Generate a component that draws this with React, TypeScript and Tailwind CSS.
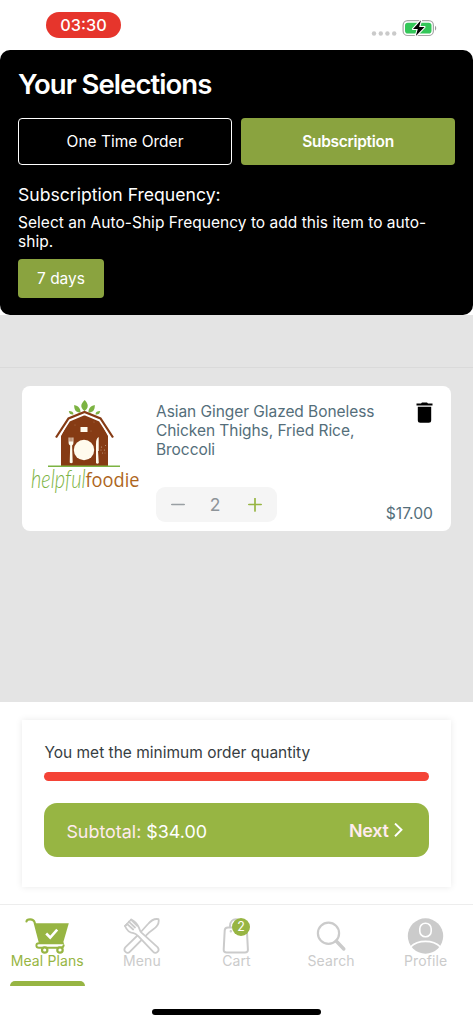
import type { ReactNode } from "react";

function StatusBar() {
  return (
    <header className="flex h-[50px] shrink-0 items-start justify-between pl-[46px] pr-9">
      <div className="mt-3 flex h-[25.5px] w-[75px] items-center justify-center rounded-full bg-[#e6352c] text-[16.3px] font-medium text-white">
        03:30
      </div>
      <svg className="mt-[18px]" width="66" height="20" viewBox="0 0 66 20">
        <g fill="#cacaca">
          <circle cx="3" cy="15.5" r="2.2" />
          <circle cx="9.8" cy="15.5" r="2.2" />
          <circle cx="16.4" cy="15.5" r="2.2" />
          <circle cx="23.2" cy="15.5" r="2.2" />
        </g>
        <rect x="32.1" y="2.7" width="30.3" height="14.8" rx="4.6" fill="white" stroke="#a6a6a6" strokeWidth="1.2" />
        <rect x="34" y="4.7" width="26.5" height="10.8" rx="2.8" fill="#34c759" />
        <path d="M64 7.7c1.600.7 1.600 4.100 0 4.800z" fill="#9b9b9b" />
        <path d="M50 2.200 42 11h4.800l-2 7 8.700-8.900h-5.400z" fill="black" stroke="white" strokeWidth="2.2" strokeLinejoin="round" paintOrder="stroke" />
      </svg>
    </header>
  );
}

function SelectionsPanel() {
  return (
    <section className="h-[265px] shrink-0 rounded-[10px] bg-black px-[18px] text-white">
      <h1 className="pt-[16.500px] text-[27.500px] leading-[34px] font-semibold tracking-[-0.950px]">Your Selections</h1>
      <div className="mt-[17px] flex gap-[9px]">
        <button className="h-[47.500px] w-[214px] rounded-[4px] border border-white text-[15.5px]">One Time Order</button>
        <button className="h-[47.500px] w-[214px] rounded-[4px] bg-[#8aa33f] text-[15.5px] font-semibold tracking-[-0.3px]">Subscription</button>
      </div>
      <h2 className="mt-[17.500px] text-[17.6px] leading-6">Subscription Frequency:</h2>
      <p className="mt-[6.500px] text-[15.5px] leading-[19px] tracking-[0.03px]">
        Select an Auto-Ship Frequency to add this item to auto-
        <br />
        ship.
      </p>
      <button className="mt-2 h-[38.500px] w-[86px] rounded-[4px] bg-[#8aa33f] text-[15.5px]">7 days</button>
    </section>
  );
}

function FoodieLogo() {
  return (
    <svg className="ml-2 mt-3 shrink-0" width="109" height="109" viewBox="30 398 109 109">
      <g fill="#7cb342">
        <path d="M84.500 411c-4.600-3.500-4-7 .2-11 3.900 4.200 4.300 7.700-.2 11z" />
        <path d="M80.500 412.500c-4.500 0-6.500-2.500-6.300-7.500 4.500 1.200 6.500 3.500 6.300 7.500zM88.500 412.500c4.500 0 6.500-2.500 6.300-7.500-4.500 1.200-6.500 3.500-6.300 7.500z" />
        <path d="M73.500 414.500c-2.700.5-4.300-.8-4.700-3.500 3 0 4.600.9 4.700 3.500zM95.500 414.500c2.700.5 4.300-.8 4.700-3.500-3 0-4.600.9-4.700 3.500z" />
      </g>
      <path d="M61 466V436l8.500-16L84.500 413.500 99.500 420l8.500 16v30z" fill="#863b14" />
      <path d="M57 438.500 69 420 84.500 413.500 100 420 112 438.500" fill="none" stroke="white" strokeWidth="3.200" />
      <path d="M56 437.500 68.500 418.500 84.500 412 100.500 418.500 113 437.500" fill="none" stroke="#863b14" strokeWidth="2.200" />
      <rect x="80.500" y="427" width="7" height="5" fill="#fffbed" />
      <circle cx="84" cy="450" r="10.200" fill="#fffbed" />
      <g fill="#fffbed">
        <path d="M68.600 437.500h1v4h.9v-4h1v4h.9v-4h1v5c0 1.800-.6 2.400-1.300 2.900l.6 17.200q-1.500 1.500-3 0l.5-17.200c-.8-.5-1.600-1.100-1.600-2.900z" />
        <path d="M96 463v-19c0-4 .8-6 2.700-7v14h-.7l.8 12q-1.400 1.300-2.800 0z" />
        <g fill="#c7a68a">
          <circle cx="101.500" cy="447" r=".6" /><circle cx="104.500" cy="450" r=".6" /><circle cx="102.500" cy="453" r=".5" />
          <circle cx="105.500" cy="445.500" r=".5" /><circle cx="101" cy="450" r=".5" /><circle cx="105" cy="453" r=".4" />
          <circle cx="75" cy="425" r=".4" /><circle cx="94" cy="422" r=".4" /><circle cx="91" cy="431" r=".4" />
        </g>
      </g>
      <path d="M48 466.300h72" stroke="#7cb342" strokeWidth="1.500" />
      <text transform="translate(31 488) scale(.8 1)" fontFamily="Lato" fontStyle="italic" fontWeight="300" fontSize="25" fill="#7cb342">helpful</text>
      <text transform="translate(85.500 487) scale(.88 1)" fontFamily="Open Sans" fontWeight="400" fontSize="20.700" fill="#ae661c">foodie</text>
    </svg>
  );
}

function CartItem() {
  return (
    <article className="mx-[22px] mt-[18px] flex h-[145px] rounded-[8px] bg-white text-[#546e7a]">
      <FoodieLogo />
      <div className="ml-[17px] flex flex-1 flex-col">
        <p className="mt-4 text-[15.5px] leading-[19px] tracking-[-0.06px] whitespace-nowrap">
          Asian Ginger Glazed Boneless
          <br />
          Chicken Thighs, Fried Rice,
          <br />
          Broccoli
        </p>
        <div className="mt-7 flex h-[35px] w-[121px] items-center justify-between rounded-[9px] bg-[#f5f5f5] px-[15px]">
          <svg width="14" height="14" viewBox="0 0 14 14"><path d="M.8 6.500h12.400" stroke="#999fa3" strokeWidth="1.700" strokeLinecap="round" /></svg>
          <span className="mr-[3px] pt-px text-[17.500px] text-[#8e9499]">2</span>
          <svg width="14" height="14" viewBox="0 0 14 14"><path d="M.8 6.500h12.400M7 .5v12.500" stroke="#97b543" strokeWidth="1.700" strokeLinecap="round" /></svg>
        </div>
      </div>
      <div className="mr-[18px] flex flex-col items-end">
        <svg className="mt-4" width="17" height="21" viewBox="0 0 17 21">
          <path d="M.5 1.500H5L6 .5h5l1 1h4.500v2H.5zM1.800 4.800h13.400V18.200a2.500 2.500 0 0 1-2.500 2.500H4.300a2.500 2.500 0 0 1-2.500-2.500z" fill="black" />
        </svg>
        <span className="mt-[80.500px] text-[15.700px] leading-[19px]">$17.00</span>
      </div>
    </article>
  );
}

function Checkout() {
  return (
    <section className="h-[202px] shrink-0 bg-white px-[22px] pt-[18px]">
      <div className="h-[167px] bg-white px-[22.400px] pt-[23px] shadow-[0_0_7px_rgba(0,0,0,0.09)]">
        <p className="text-[15.5px] leading-5 text-[#373d42]">You met the minimum order quantity</p>
        <div className="mt-[9.300px] h-[9px] rounded-full bg-[#f44336]" />
        <button className="mt-[22px] flex h-[54px] w-full items-center justify-between rounded-[13px] bg-[#97b543] pl-[22px] pr-[26px] text-[17.900px] text-[#ffebee]">
          <span className="pt-[3px]">
            Subtotal: <span className="text-white">$34.00</span>
          </span>
          <span className="flex items-center gap-[5px] pt-[2px] font-semibold tracking-[-0.250px]">
            Next
            <svg width="9" height="16" viewBox="0 0 9 16" fill="none"><path d="m1 .5 6.500 6.300L1 13.200" stroke="white" strokeWidth="1.900" /></svg>
          </span>
        </button>
      </div>
    </section>
  );
}

const MealPlansIcon = () => (
  <svg width="44" height="36" viewBox="0 0 44 36" fill="none">
    <path d="M1.500 3.500c.3-2.800 6.800-3.200 8 .5l5.500 21" stroke="#97b543" strokeWidth="2.200" strokeLinecap="round" />
    <path d="M10 5.300h33.800L38 25.300H15.600z" fill="#97b543" />
    <path d="m21.200 15.500 4 4 7-7.800" stroke="white" strokeWidth="2.600" />
    <path d="M38 25.300H14c-3.500 0-3.500 4.500 0 4.500h22c1.700 0 2.300-.7 2.700-2.500" stroke="#97b543" strokeWidth="1.900" strokeLinecap="round" strokeLinejoin="round" />
    <circle cx="19.700" cy="32" r="2.700" fill="white" stroke="#97b543" strokeWidth="2.200" />
    <circle cx="35" cy="32" r="2.700" fill="white" stroke="#97b543" strokeWidth="2.200" />
  </svg>
);

const MenuIcon = () => (
  <svg width="37" height="36" viewBox="0 0 37 36" fill="none" stroke="#cbcbcb" strokeWidth="1.800" strokeLinecap="round" strokeLinejoin="round">
    <path d="M35.500 1.200c.8 3.500-1.500 7.700-5.500 10.300-3 2-5 3.700-8 7L7 33.700c-3 3-7.500-1-4.500-4.500L16 16l9-10c3-3.500 6.500-5.700 10.500-4.800z" />
    <path d="M2 8c2 5 4.500 6.700 8.500 7.200 2 .3 3.300 1.600 5 3.200L30 33.700c3 3 7.500-1 4.500-4.500L18.500 14.700c-2-2-1.700-3.700-3-6C13.700 5 11 3 8.200 1.500z" fill="white" />
    <path d="m2 8 1.700-1.500M4 5.800l6.200 5.700M5.800 3.700l6.200 5.800M8 1.700l6 6" strokeWidth="1.800" />
  </svg>
);

const CartIcon = () => (
  <div className="relative h-9 w-[37px]">
    <svg width="37" height="36" viewBox="0 0 37 36" fill="none" stroke="#cbcbcb" strokeWidth="2">
      <path d="M10 9.500h16c1.800 0 2.800 1 2.900 3l1 19c.1 2-.9 3-3 3H8.600c-2 0-3-1-2.900-3l1-19c.1-2 1.100-3 3.300-3zM12 9V8c0-9 12-9 12 0v1" />
      <circle cx="12.800" cy="13.300" r=".5" strokeWidth="1.400" />
    </svg>
    <span className="absolute left-[14px] top-0 flex size-[18px] items-center justify-center rounded-full bg-[#97b543] pt-px text-[12.500px] leading-none text-white">2</span>
  </div>
);

const SearchIcon = () => (
  <svg width="37" height="36" viewBox="0 0 37 36" fill="none" stroke="#cbcbcb">
    <circle cx="15.500" cy="15.300" r="10.600" strokeWidth="2.200" />
    <path d="m23.200 23 7.600 8" strokeWidth="3.400" strokeLinecap="round" />
  </svg>
);

const ProfileIcon = () => (
  <svg width="37" height="36" viewBox="0 0 37 36">
    <circle cx="18.500" cy="18" r="17.700" fill="#cbcbcb" />
    <rect x="12.800" y="5.200" width="11.400" height="13.600" rx="5.500" fill="none" stroke="white" strokeWidth="1.600" />
    <path d="M3.500 29c7.500-7.500 22.500-7.500 30 0" fill="none" stroke="white" strokeWidth="1.700" />
  </svg>
);

function NavItem({ icon, label, active }: { icon: ReactNode; label: string; active?: boolean }) {
  return (
    <a className={`flex flex-1 flex-col items-center ${active ? "text-[#97b543]" : "text-[#cbcbcb]"}`}>
      {icon}
      <span className="mt-[-1.500px] text-[14px] leading-[17px] tracking-[0.12px]">{label}</span>
      {active && <span className="mt-[12px] h-[4.500px] w-[75px] rounded-t-[5px] bg-[#97b543]" />}
    </a>
  );
}

export default function App() {
  return (
    <main className="flex h-[1024px] w-[473px] flex-col overflow-hidden bg-white font-['Inter',sans-serif] leading-none">
      <StatusBar />
      <SelectionsPanel />
      <section className="h-[387px] shrink-0 bg-[#e4e4e4]">
        <div className="h-[53px] border-b border-[#dadada]" />
        <CartItem />
      </section>
      <Checkout />
      <nav className="flex h-[105px] shrink-0 border-t border-[#ededed] pt-[12.500px]">
        <NavItem icon={<MealPlansIcon />} label="Meal Plans" active />
        <NavItem icon={<MenuIcon />} label="Menu" />
        <NavItem icon={<CartIcon />} label="Cart" />
        <NavItem icon={<SearchIcon />} label="Search" />
        <NavItem icon={<ProfileIcon />} label="Profile" />
      </nav>
      <div className="ml-[152px] h-[5.5px] w-[169px] shrink-0 rounded-full bg-black" />
    </main>
  );
}
